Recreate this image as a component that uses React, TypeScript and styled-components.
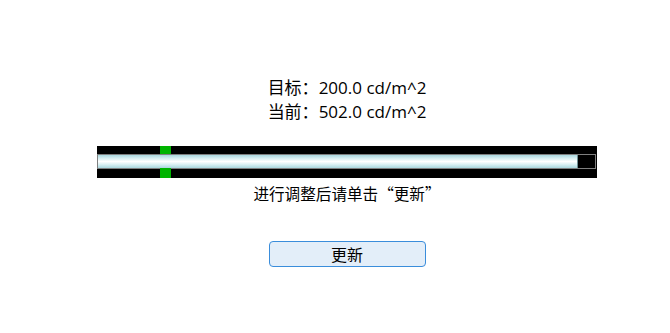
import React from 'react'
import styled, { createGlobalStyle } from 'styled-components'

const GlobalStyle = createGlobalStyle`
  html, body {
    margin: 0;
    padding: 0;
    background: #ffffff;
  }
  body {
    font-family: "Noto Sans CJK SC", "Open Sans", sans-serif;
    color: #000000;
  }
`

const Page = styled.div`
  display: flex;
  flex-direction: column;
  align-items: center;
  width: 500px;
  padding: 76px 0 0 97px;
`

const Reading = styled.div`
  font-family: "Open Sans", "Noto Sans CJK SC", sans-serif;
  font-size: 17px;
  line-height: 24px;
  text-align: center;
  white-space: nowrap;
`

const Meter = styled.div`
  position: relative;
  box-sizing: border-box;
  width: 500px;
  height: 32px;
  margin-top: 22px;
  padding: 8px 1px 10px 0;
  background: #000000;
`

const Track = styled.div`
  box-sizing: border-box;
  display: flex;
  height: 15px;
  border: 1px solid #7f7f7f;
  background: #000000;
`

const Fill = styled.div`
  height: 100%;
  border-right: 1px solid #6f8f94;
  background: linear-gradient(
    to bottom,
    #a9d7de 0%,
    #d6eef1 25%,
    #ffffff 50%,
    #d6eef1 75%,
    #a9d7de 100%
  );
`

const Marker = styled.div`
  position: absolute;
  top: 0;
  bottom: 0;
  width: 11px;
  background: linear-gradient(
    to bottom,
    #00b400 0,
    #00b400 8px,
    transparent 8px,
    transparent 22px,
    #00b400 22px
  );
`

const Hint = styled.div`
  margin-top: 4px;
  font-size: 15.6px;
  line-height: 22px;
  white-space: nowrap;
`

const UpdateButton = styled.button`
  box-sizing: border-box;
  width: 157px;
  height: 26px;
  margin-top: 37px;
  padding: 0;
  border: 1px solid #3a8ddb;
  border-radius: 4px;
  background: #e3eef9;
  font-family: "Noto Sans CJK SC", sans-serif;
  font-size: 16px;
  line-height: 22px;
  color: #000000;
  cursor: pointer;
`

const target = 200.0
const current = 502.0
const fillPercent = 96.4
const markerPercent = 12.6

export default function App() {
  return (
    <>
      <GlobalStyle />
      <Page>
        <Reading>目标：{target.toFixed(1)} cd/m^2</Reading>
        <Reading>当前：{current.toFixed(1)} cd/m^2</Reading>
        <Meter>
          <Track>
            <Fill style={{ width: `${fillPercent}%` }} />
          </Track>
          <Marker style={{ left: `${markerPercent}%` }} />
        </Meter>
        <Hint>进行调整后请单击“更新”</Hint>
        <UpdateButton>更新</UpdateButton>
      </Page>
    </>
  )
}
